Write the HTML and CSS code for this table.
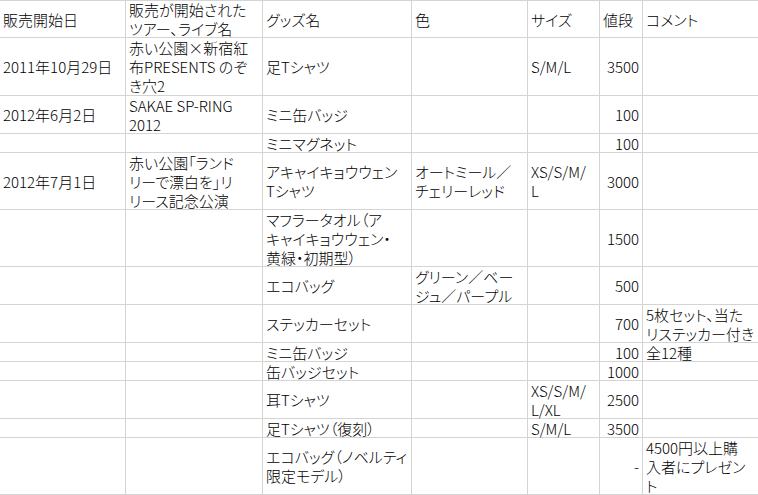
FILE: index.html
```html
<!DOCTYPE html>
<html lang="ja">
<head>
<meta charset="utf-8">
<title>グッズ一覧</title>
<link rel="stylesheet" href="styles.css">
</head>
<body>
<div class="sheet">
  <div class="c">販売開始日</div><div class="c">販売が開始された<br>ツアー、ライブ名</div><div class="c">グッズ名</div><div class="c">色</div><div class="c">サイズ</div><div class="c">値段</div><div class="c">コメント</div>

  <div class="c">2011年10月29日</div><div class="c">赤い公園×新宿紅<br>布PRESENTS のぞ<br>き穴2</div><div class="c">足Tシャツ</div><div class="c"></div><div class="c">S/M/L</div><div class="c num">3500</div><div class="c"></div>

  <div class="c">2012年6月2日</div><div class="c">SAKAE SP-RING<br>2012</div><div class="c">ミニ缶バッジ</div><div class="c"></div><div class="c"></div><div class="c num">100</div><div class="c"></div>

  <div class="c"></div><div class="c"></div><div class="c">ミニマグネット</div><div class="c"></div><div class="c"></div><div class="c num">100</div><div class="c"></div>

  <div class="c">2012年7月1日</div><div class="c">赤い公園「ランド<br>リーで漂白を」リ<br>リース記念公演</div><div class="c">アキャイキョウウェン<br>Tシャツ</div><div class="c">オートミール／<br>チェリーレッド</div><div class="c">XS/S/M/<br>L</div><div class="c num">3000</div><div class="c"></div>

  <div class="c"></div><div class="c"></div><div class="c">マフラータオル（ア<br>キャイキョウウェン・<br>黄緑・初期型）</div><div class="c"></div><div class="c"></div><div class="c num">1500</div><div class="c"></div>

  <div class="c"></div><div class="c"></div><div class="c">エコバッグ</div><div class="c">グリーン／ベー<br>ジュ／パープル</div><div class="c"></div><div class="c num">500</div><div class="c"></div>

  <div class="c"></div><div class="c"></div><div class="c">ステッカーセット</div><div class="c"></div><div class="c"></div><div class="c num">700</div><div class="c">5枚セット、当た<br>リステッカー付き</div>

  <div class="c"></div><div class="c"></div><div class="c">ミニ缶バッジ</div><div class="c"></div><div class="c"></div><div class="c num">100</div><div class="c">全12種</div>

  <div class="c"></div><div class="c"></div><div class="c">缶バッジセット</div><div class="c"></div><div class="c"></div><div class="c num">1000</div><div class="c"></div>

  <div class="c"></div><div class="c"></div><div class="c">耳Tシャツ</div><div class="c"></div><div class="c">XS/S/M/<br>L/XL</div><div class="c num">2500</div><div class="c"></div>

  <div class="c"></div><div class="c"></div><div class="c">足Tシャツ（復刻）</div><div class="c"></div><div class="c">S/M/L</div><div class="c num">3500</div><div class="c"></div>

  <div class="c"></div><div class="c"></div><div class="c">エコバッグ（ノベルティ<br>限定モデル）</div><div class="c"></div><div class="c"></div><div class="c num">-</div><div class="c">4500円以上購<br>入者にプレゼン<br>ト</div>
</div>
</body>
</html>
```

FILE: styles.css
```css
html, body {
  margin: 0;
  padding: 0;
  background: #ffffff;
  overflow: hidden;
}

.sheet {
  display: grid;
  grid-template-columns: 125px 136px 148px 115px 71px 42px 200px;
  grid-template-rows: 36px 57px 37px 18px 56px 56px 37px 37px 18px 18px 37px 18px 56px;
  gap: 1px;
  padding: 1px 0;
  width: max-content;
  background: #d4d4d4;
  font-family: "Noto Sans CJK JP", "Noto Sans", sans-serif;
  font-feature-settings: "palt";
  font-weight: 300;
  font-size: 15px;
  line-height: 19px;
  color: #000000;
}

.c {
  background: #ffffff;
  display: flex;
  align-items: center;
  padding: 0 3px;
  white-space: nowrap;
}

.num {
  justify-content: flex-end;
  padding-right: 3px;
}
```
